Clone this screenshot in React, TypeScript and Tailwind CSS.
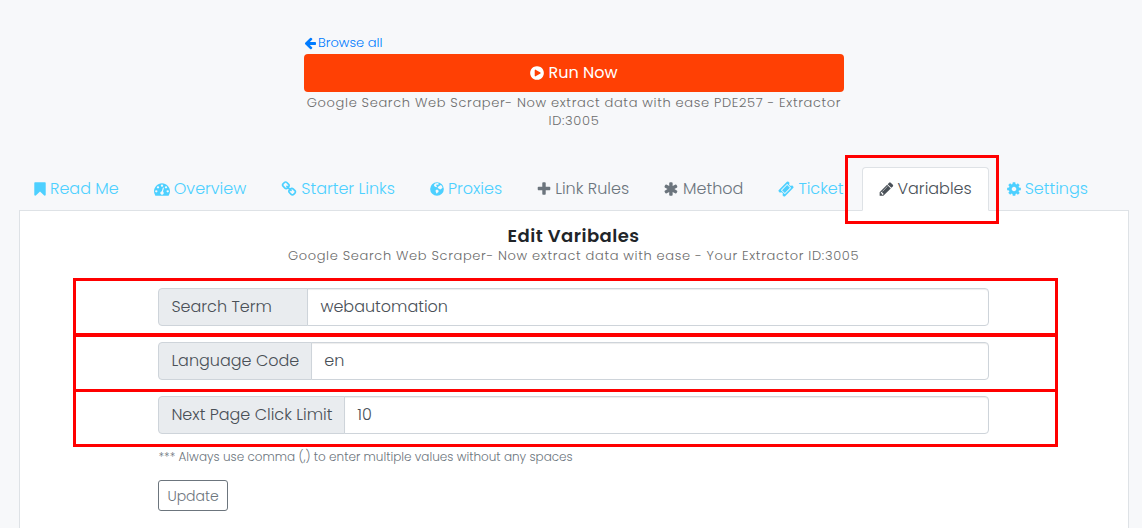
import { useState } from "react";

const ICONS = {
  arrow: {
    box: "64 0 1600 1792",
    size: "w-3",
    d: "M1664 896v128q0 53-32.5 90.5t-84.5 37.5h-704l293 294q38 36 38 90t-38 90l-75 76q-37 37-90 37-52 0-91-37l-651-652q-37-37-37-90 0-52 37-91l651-650q38-38 91-38 52 0 90 38l75 74q38 38 38 91t-38 91l-293 293h704q52 0 84.5 37.5t32.5 90.5z",
  },
  play: {
    box: "128 0 1536 1792",
    size: "w-3.5",
    d: "M896 128q209 0 385.5 103t279.5 279.5 103 385.5-103 385.5-279.5 279.5-385.5 103-385.5-103-279.5-279.5-103-385.5 103-385.5 279.5-279.5 385.5-103zm384 823q32-18 32-55t-32-55l-544-320q-31-19-64-1-32 19-32 56v640q0 37 32 56 16 8 32 8 17 0 32-9z",
  },
  bookmark: {
    box: "256 0 1280 1792",
    size: "w-3",
    d: "M1420 128q23 0 44 9 33 13 52.5 41t19.5 62v1289q0 34-19.5 62t-52.5 41q-19 8-44 8-48 0-83-32l-441-424-441 424q-36 33-83 33-23 0-44-9-33-13-52.5-41t-19.5-62v-1289q0-34 19.5-62t52.5-41q21-9 44-9h1048z",
  },
  gauge: {
    box: "0 0 1792 1792",
    size: "w-4",
    d: "M384 1152q0-53-37.5-90.5t-90.5-37.5-90.5 37.5-37.5 90.5 37.5 90.5 90.5 37.5 90.5-37.5 37.5-90.5zm192-448q0-53-37.5-90.5t-90.5-37.5-90.5 37.5-37.5 90.5 37.5 90.5 90.5 37.5 90.5-37.5 37.5-90.5zm428 481l101-382q6-26-7.5-48.5t-38.5-29.5-48 6.5-30 39.5l-101 382q-60 5-107 43.5t-63 98.5q-20 77 20 146t117 89 146-20 89-117q16-60-6-117t-72-91zm660-33q0-53-37.5-90.5t-90.5-37.5-90.5 37.5-37.5 90.5 37.5 90.5 90.5 37.5 90.5-37.5 37.5-90.5zm-640-640q0-53-37.5-90.5t-90.5-37.5-90.5 37.5-37.5 90.5 37.5 90.5 90.5 37.5 90.5-37.5 37.5-90.5zm448 192q0-53-37.5-90.5t-90.5-37.5-90.5 37.5-37.5 90.5 37.5 90.5 90.5 37.5 90.5-37.5 37.5-90.5zm320 448q0 261-141 483-19 29-54 29h-1402q-35 0-54-29-141-221-141-483 0-182 71-348t191-286 286-191 348-71 348 71 286 191 191 286 71 348z",
  },
  chain: {
    box: "64 0 1664 1792",
    size: "w-4",
    d: "M1520 1216q0-40-28-68l-208-208q-28-28-68-28-42 0-72 32 3 3 19 18.5t21.5 21.5 15 19 13 25.5 3.5 27.5q0 40-28 68t-68 28q-15 0-27.5-3.5t-25.5-13-19-15-21.5-21.5-18.5-19q-33 31-33 73 0 40 28 68l206 207q27 27 68 27 40 0 68-26l147-146q28-28 28-67zm-703-705q0-40-28-68l-206-207q-28-28-68-28-39 0-68 27l-147 146q-28 28-28 67 0 40 28 68l208 208q27 27 68 27 42 0 72-31-3-3-19-18.5t-21.5-21.5-15-19-13-25.5-3.5-27.5q0-40 28-68t68-28q15 0 27.5 3.5t25.5 13 19 15 21.5 21.5 18.5 19q33-31 33-73zm895 705q0 120-85 203l-147 146q-83 83-203 83-121 0-204-85l-206-207q-83-83-83-203 0-123 88-209l-88-88q-86 88-208 88-120 0-204-84l-208-208q-84-84-84-204t85-203l147-146q83-83 203-83 121 0 204 85l206 207q83 83 83 203 0 123-88 209l88 88q86-88 208-88 120 0 204 84l208 208q84 84 84 204z",
  },
  globe: {
    box: "128 0 1536 1792",
    size: "w-3.5",
    d: "M896 128a768 768 0 1 0 0 1536a768 768 0 1 0 0-1536zM700 280L960 230L1130 330L1000 420L860 400L800 500L900 620L800 700L640 620L560 500L600 360zM1140 560L1300 440L1430 540L1520 720L1400 860L1260 960L1120 860L960 760L1020 640zM760 1000L920 960L1080 1080L1060 1220L940 1320L880 1420L800 1320L740 1160z",
  },
  plus: {
    box: "192 0 1408 1792",
    size: "w-3.5",
    d: "M1600 736v192q0 40-28 68t-68 28h-416v416q0 40-28 68t-68 28h-192q-40 0-68-28t-28-68v-416h-416q-40 0-68-28t-28-68v-192q0-40 28-68t68-28h416v-416q0-40 28-68t68-28h192q40 0 68 28t28 68v416h416q40 0 68 28t28 68z",
  },
  asterisk: {
    box: "192 0 1408 1792",
    size: "w-[15px]",
    d: "M1482 1050q46 26 59.5 77.5t-12.5 97.5l-64 110q-26 46-77.5 59.5t-97.5-12.5l-266-153v307q0 52-38 90t-90 38h-128q-52 0-90-38t-38-90v-307l-266 153q-46 26-97.5 12.5t-77.5-59.5l-64-110q-26-46-12.5-97.5t59.5-77.5l266-154-266-154q-46-26-59.5-77.5t12.5-97.5l64-110q26-46 77.5-59.5t97.5 12.5l266 153v-307q0-52 38-90t90-38h128q52 0 90 38t38 90v307l266-153q46-26 97.5-12.5t77.5 59.5l64 110q26 46 12.5 97.5t-59.5 77.5l-266 154z",
  },
  ticket: {
    box: "32 0 1728 1792",
    size: "w-4",
    d: "M1024 452l316 316-572 572-316-316zm-211 979l618-618q19-19 19-45t-19-45l-362-362q-18-18-45-18t-45 18l-618 618q-19 19-19 45t19 45l362 362q18 18 45 18t45-18zm889-637l-907 908q-37 37-90.5 37t-90.5-37l-126-126q56-56 56-136t-56-136-136-56-136 56l-125-126q-37-37-37-90.5t37-90.5l907-906q37-37 90.5-37t90.5 37l125 125q-56 56-56 136t56 136 136 56 136-56l126 125q37 37 37 90.5t-37 90.5z",
  },
  pencil: {
    box: "128 0 1536 1792",
    size: "w-[15px]",
    d: "M491 1536l91-91-235-235-91 91v107h128v128h107zm523-928q0-22-22-22-10 0-17 7l-542 542q-7 7-7 17 0 22 22 22 10 0 17-7l542-542q7-7 7-17zm-54-192l416 416-832 832h-416v-416zm683 96q0 53-37 90l-166 166-416-416 166-165q36-38 90-38 53 0 91 38l235 234q37 39 37 91z",
  },
  cog: {
    box: "128 0 1536 1792",
    size: "w-3.5",
    d: "M1152 896q0-106-75-181t-181-75-181 75-75 181 75 181 181 75 181-75 75-181zm512-109v222q0 12-8 23t-20 13l-185 28q-19 54-39 91 35 50 107 138 10 12 10 25t-9 23q-27 37-99 108t-94 71q-12 0-26-9l-138-108q-44 23-91 38-16 136-29 186-7 28-36 28h-222q-14 0-24.5-8.5t-11.5-21.5l-28-184q-49-16-90-37l-141 107q-10 9-25 9-14 0-25-11-126-114-165-168-7-10-7-23 0-12 8-23 15-21 51-66.5t54-70.5q-27-50-41-99l-183-27q-13-2-21-12.5t-8-23.5v-222q0-12 8-23t19-13l186-28q14-46 39-92-40-57-107-138-10-12-10-24 0-10 9-23 26-36 98.5-107.5t94.5-71.5q13 0 26 10l138 107q44-23 91-38 16-136 29-186 7-28 36-28h222q14 0 24.5 8.5t11.5 21.5l28 184q49 16 90 37l142-107q9-9 24-9 13 0 25 10 129 119 165 170 7 8 7 22 0 12-8 23-15 21-51 66.5t-54 70.5q26 50 41 98l183 28q13 2 21 12.5t8 23.5z",
  },
};

type IconName = keyof typeof ICONS;

function Icon({ name }: { name: IconName }) {
  const icon = ICONS[name];
  return (
    <svg viewBox={icon.box} className={`h-4 shrink-0 ${icon.size}`} fill="currentColor" fillRule={name === "globe" ? "evenodd" : "nonzero"} aria-hidden="true">
      <path d={icon.d} />
    </svg>
  );
}

const TABS: { label: string; icon: IconName; muted?: boolean }[] = [
  { label: "Read Me", icon: "bookmark" },
  { label: "Overview", icon: "gauge" },
  { label: "Starter Links", icon: "chain" },
  { label: "Proxies", icon: "globe" },
  { label: "Link Rules", icon: "plus", muted: true },
  { label: "Method", icon: "asterisk", muted: true },
  { label: "Ticket", icon: "ticket" },
  { label: "Variables", icon: "pencil" },
  { label: "Settings", icon: "cog" },
];

const FIELDS = [
  { id: "search_term", label: "Search Term", labelWidth: "min-w-[150px]", mark: "-top-[10px] h-[59px]" },
  { id: "language_code", label: "Language Code", labelWidth: "", mark: "-top-[9px] h-[59px]" },
  { id: "page_limit", label: "Next Page Click Limit", labelWidth: "", mark: "-top-[7px] h-[58px]" },
];

export default function App() {
  const [active, setActive] = useState("Variables");
  const [values, setValues] = useState<Record<string, string>>({
    search_term: "webautomation",
    language_code: "en",
    page_limit: "10",
  });

  return (
    <div className="flex min-h-screen flex-col bg-[#f7f8fa] pt-[33px] pr-[13px] pl-[19px] font-['Poppins','Inter',sans-serif] font-light text-[#495057]">
      <header className="mx-auto w-full max-w-[540px]">
        <a href="#browse" className="flex items-center gap-0.5 pb-0.5 text-[13px] leading-[19px] text-[#007bff]">
          <Icon name="arrow" /> Browse all
        </a>
        <button type="button" className="flex h-[38px] w-full items-center justify-center gap-1 rounded bg-[#ff4004] text-base font-normal text-white hover:bg-[#e63a04]">
          <Icon name="play" /> Run Now
        </button>
        <p className="mt-0.5 text-center text-[13px] leading-[18px] tracking-wider text-[#6c6c6c]">
          Google Search Web Scraper- Now extract data with ease PDE257 - Extractor ID:3005
        </p>
      </header>

      <nav className="mt-[37px] -ml-0.5 flex gap-px">
        {TABS.map((tab) => (
          <div key={tab.label} className={`relative ${active === tab.label ? "-mb-px" : ""}`}>
            <button
              type="button"
              onClick={() => setActive(tab.label)}
              className={`flex items-center gap-1 rounded-t border px-4 leading-6 ${
                active === tab.label
                  ? "h-11 border-[#dee2e6] border-b-white bg-white text-[#495057]"
                  : tab.muted
                    ? "h-[43px] border-transparent text-[#6c757d]"
                    : "h-[43px] border-transparent text-[#4dd0ff]"
              }`}
            >
              <Icon name={tab.icon} /> {tab.label}
            </button>
            {tab.label === "Variables" && (
              <div className="pointer-events-none absolute -top-3 -right-[10px] -bottom-[13px] -left-[17px] z-10 border-3 border-[#ff0000]" />
            )}
          </div>
        ))}
      </nav>

      <main className="flex-1 border border-b-0 border-[#dee2e6] bg-white pt-[13px] pr-px pb-4">
        <h1 className="text-center text-lg leading-6 font-semibold tracking-wide text-[#212529]">Edit Varibales</h1>
        <p className="-mt-px text-center text-[13px] leading-[18px] tracking-wider text-[#6c6c6c]">
          Google Search Web Scraper- Now extract data with ease - Your Extractor ID:3005
        </p>

        <form onSubmit={(e) => e.preventDefault()} className="mx-auto mt-[23px] w-3/4">
          <div className="space-y-4">
            {FIELDS.map((f) => (
              <div key={f.id} className="relative flex h-[38px]">
                <label htmlFor={f.id} className={`flex shrink-0 items-center rounded-l border border-[#ced4da] bg-[#e9ecef] px-3 ${f.labelWidth}`}>
                  {f.label}
                </label>
                <input
                  id={f.id}
                  value={values[f.id]}
                  onChange={(e) => setValues({ ...values, [f.id]: e.target.value })}
                  className="-ml-px min-w-0 flex-1 rounded-r border border-[#ced4da] bg-white px-3 shadow-[inset_0_1px_1px_rgba(0,0,0,0.075)] outline-none focus:border-[#80bdff]"
                />
                <div className={`pointer-events-none absolute -right-[69px] -left-[85px] border-3 border-[#ff0000] ${f.mark}`} />
              </div>
            ))}
          </div>
          <p className="mt-[14px] text-xs leading-[18px] text-[#6c757d]">
            *** Always use comma (,) to enter multiple values without any spaces
          </p>
          <button type="submit" className="mt-[14px] h-[31px] rounded-[3px] border border-[#6c757d] px-2 text-sm text-[#6c757d] hover:bg-gray-50">
            Update
          </button>
        </form>
      </main>
    </div>
  );
}
